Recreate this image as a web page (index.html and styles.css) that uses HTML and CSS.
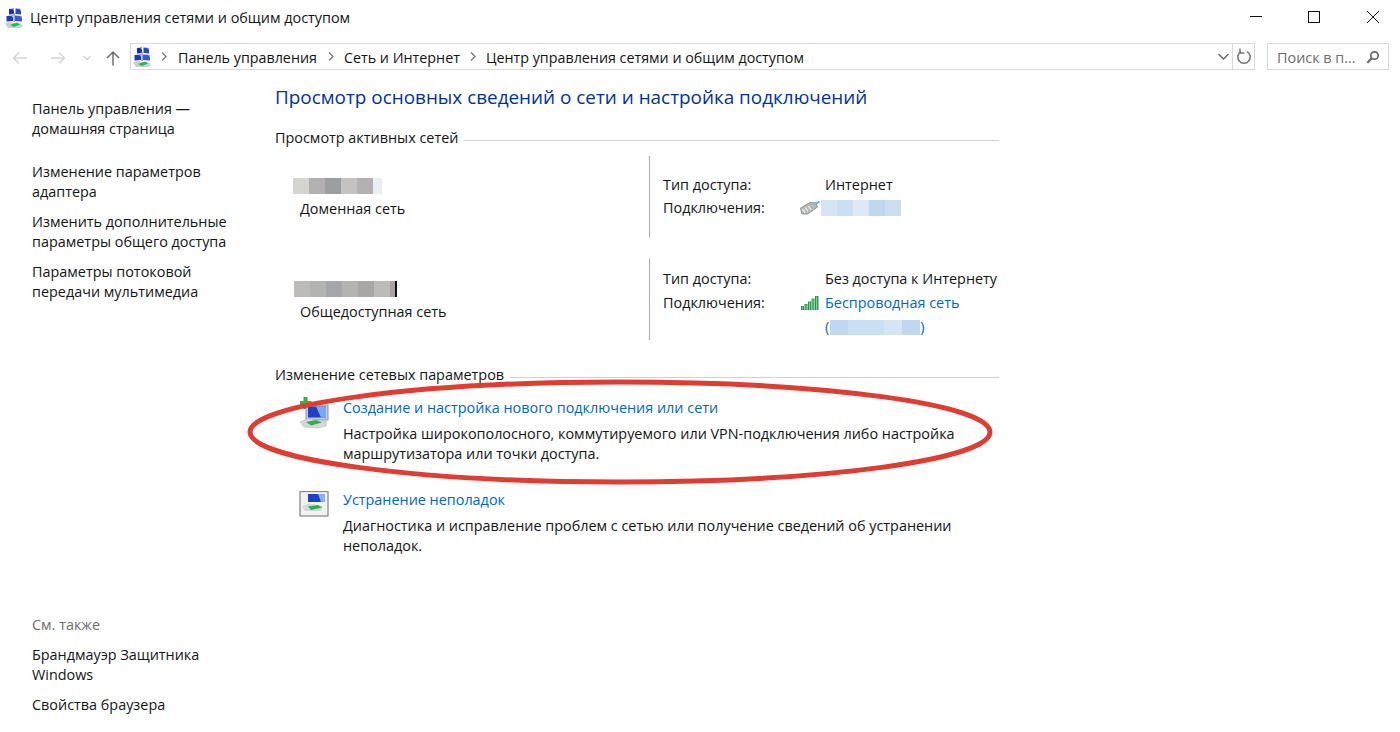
FILE: index.html
```html
<!DOCTYPE html>
<html lang="ru">
<head>
<meta charset="utf-8">
<title>Центр управления сетями и общим доступом</title>
<link rel="stylesheet" href="styles.css">
</head>
<body>
<div class="window">
  <svg width="0" height="0" class="defs">
    <defs>
      <g id="cp">
        <path d="M0 15.5L3 14L16 15.5L18 18L15 20L3 20Z" fill="#c9cfd2"/>
        <path d="M5 17L12 14.5L15 16.500L9 19Z" fill="#2bb84f"/>
        <path d="M4 1L9 .5V6L4 6.500Z" fill="#1d2fae"/>
        <path d="M10.500 .5L16 1V6.500L10.500 6Z" fill="#2a46c8"/>
        <path d="M1.500 8L8 7.500V13L1.500 13.500Z" fill="#2238b8"/>
        <path d="M10 7.500L17 8V13.500L10 13Z" fill="#3a5ad4"/>
        <path d="M7 .8L9 .5V3ZM14 .8L16 1V3.500ZM6 7.600L8 7.500V10ZM15 7.900L17 8V10.500Z" fill="#8fb0f0"/>
        <rect x="8.300" y="5" width="1.600" height="9" fill="#9aa3b2"/>
      </g>
    </defs>
  </svg>
  <header class="titlebar">
    <svg class="appicon" width="18" height="20" viewBox="0 0 18 20"><use href="#cp"/></svg>
    <span class="wintitle">Центр управления сетями и общим доступом</span>
    <div class="controls">
      <svg class="ctl" width="12" height="12" viewBox="0 0 12 12"><path d="M0 5.500H12" stroke="#111" fill="none"/></svg>
      <svg class="ctl" width="12" height="12" viewBox="0 0 12 12"><rect x=".5" y=".5" width="11" height="11" stroke="#111" fill="none"/></svg>
      <svg class="ctl" width="12" height="12" viewBox="0 0 12 12"><path d="M0 0L12 12M12 0L0 12" stroke="#111" fill="none"/></svg>
    </div>
  </header>
  <div class="navbar">
    <div class="navbtns">
      <svg width="16" height="14" viewBox="0 0 16 14"><path d="M15 7H1.500M7 1.500L1.500 7L7 12.500" stroke="#d4d4d4" stroke-width="1.400" fill="none"/></svg>
      <svg width="16" height="14" viewBox="0 0 16 14"><path d="M1 7H14.500M9 1.500L14.500 7L9 12.500" stroke="#d4d4d4" stroke-width="1.400" fill="none"/></svg>
      <svg width="8" height="6" viewBox="0 0 8 6"><path d="M.5 1L4 4.500L7.500 1" stroke="#d4d4d4" stroke-width="1.300" fill="none"/></svg>
      <svg width="14" height="16" viewBox="0 0 14 16"><path d="M7 15.500V2M1 8L7 2L13 8" stroke="#6d6d6d" stroke-width="1.500" fill="none"/></svg>
    </div>
    <div class="address">
      <svg class="addricon" width="18" height="20" viewBox="0 0 18 20"><use href="#cp"/></svg>
      <svg class="sep" width="6" height="9" viewBox="0 0 6 9"><path d="M1 .5L5 4.500L1 8.500" stroke="#777" stroke-width="1.300" fill="none"/></svg>
      <span class="crumb first-crumb">Панель управления</span>
      <svg class="sep" width="6" height="9" viewBox="0 0 6 9"><path d="M1 .5L5 4.500L1 8.500" stroke="#777" stroke-width="1.300" fill="none"/></svg>
      <span class="crumb">Сеть и Интернет</span>
      <svg class="sep" width="6" height="9" viewBox="0 0 6 9"><path d="M1 .5L5 4.500L1 8.500" stroke="#777" stroke-width="1.300" fill="none"/></svg>
      <span class="crumb">Центр управления сетями и общим доступом</span>
      <svg class="drop" width="11" height="7" viewBox="0 0 11 7"><path d="M.5 1L5.500 6L10.500 1" stroke="#666" stroke-width="1.400" fill="none"/></svg>
      <div class="refresh">
        <svg width="16" height="17" viewBox="0 0 16 17"><path d="M5 3.600A6.200 6.200 0 1 0 11 3.600" stroke="#777" stroke-width="1.600" fill="none"/><path d="M4 .5V5H8.500" stroke="#777" stroke-width="1.500" fill="none"/></svg>
      </div>
    </div>
    <div class="search">
      <span class="crumb">Поиск в п...</span>
      <svg width="14" height="14" viewBox="0 0 14 14"><circle cx="8.500" cy="5.500" r="3.700" stroke="#666" stroke-width="1.700" fill="none"/><path d="M5.800 8.200L1.300 12.700" stroke="#666" stroke-width="2.200"/></svg>
    </div>
  </div>
  <div class="body">
    <aside class="sidebar">
      <a class="sidelink">Панель управления —<br>домашняя страница</a>
      <a class="sidelink gap23">Изменение параметров<br>адаптера</a>
      <a class="sidelink">Изменить дополнительные<br>параметры общего доступа</a>
      <a class="sidelink">Параметры потоковой<br>передачи мультимедиа</a>
      <div class="also">См. также</div>
      <a class="sidelink">Брандмауэр Защитника<br>Windows</a>
      <a class="sidelink">Свойства браузера</a>
    </aside>
    <main class="content">
      <h1>Просмотр основных сведений о сети и настройка подключений</h1>
      <div class="sechead first-sec"><span>Просмотр активных сетей</span><i></i></div>
      <section class="net net1">
        <div class="netleft">
          <div class="mask m1"><b class="g1"></b><b class="g2"></b><b class="g3"></b><b class="g4"></b><b class="g2"></b><b class="g5"></b></div>
          <div class="netname">Доменная сеть</div>
        </div>
        <div class="netright">
          <div class="kv"><span class="k">Тип доступа:</span><span>Интернет</span></div>
          <div class="kv"><span class="k">Подключения:</span>
            <svg class="conn" width="20" height="14" viewBox="0 0 20 14"><path d="M.5 7L10 1.500L16 2L17.500 6L7.500 13L2 13Z" fill="#b4b8b7" stroke="#7b807e" stroke-width=".8"/><path d="M2.500 8L5 12M5.500 6.500L8 10.500M8.500 5L11 9" stroke="#f6f6f2" stroke-width="1.200"/><path d="M14 3L19.500 .8" stroke="#78b6ea" stroke-width="2.400"/></svg>
            <div class="mask m2"><b class="l1"></b><b class="l2"></b><b class="l3"></b><b class="l4"></b><b class="l2"></b></div>
          </div>
        </div>
      </section>
      <section class="net net2">
        <div class="netleft">
          <div class="mask m3"><b class="g6"></b><b class="g7"></b><b class="g8"></b><b class="g7"></b><b class="g9"></b><b class="g6"></b><b class="g10"></b><b class="bar"></b></div>
          <div class="netname">Общедоступная сеть</div>
        </div>
        <div class="netright">
          <div class="kv"><span class="k">Тип доступа:</span><span>Без доступа к Интернету</span></div>
          <div class="kv"><span class="k">Подключения:</span>
            <svg class="conn" width="20" height="16" viewBox="0 0 20 16"><path d="M1 11h3v4H1zM4.500 9h3v6h-3zM8 6.500h3V15H8zM11.500 3.500h3V15h-3zM15 1h3.500v14H15z" fill="#2f8f4e"/><path d="M2 11.500h1v3H2zM5.500 9.500h1v5h-1zM9 7h1v8H9zM12.500 4h1v11h-1zM16 1.500h1.200V15H16z" fill="#7fcf92"/></svg>
            <a class="link">Беспроводная сеть</a>
          </div>
          <div class="kv"><span class="k"></span><a class="link">(</a><div class="mask m4"><b class="l4"></b><b class="l2"></b><b class="l2"></b><b class="l1"></b><b class="l4"></b></div><a class="link">)</a></div>
        </div>
      </section>
      <div class="sechead sec2"><span>Изменение сетевых параметров</span><i></i></div>
      <div class="task">
        <svg class="taskicon icon1" width="30" height="33" viewBox="0 0 30 33"><path d="M4.500 1h4v4h4v4h-4v4h-4V9H1V5h3.500z" fill="#3fae3a"/><rect x="7" y="9" width="22" height="15" fill="#c2ccdc" stroke="#8893a6"/><rect x="9" y="10.500" width="18" height="11" fill="#1e3fc8"/><path d="M17 10.500h10v11h-5z" fill="#7fa8ee"/><path d="M1 26L9 22.500L27 25L27 30L19 32L5 31Z" fill="#d5d8da" stroke="#aab" stroke-width=".5"/><path d="M7 26L17 24L23 26.500L12 29.500Z" fill="#27b34a"/></svg>
        <div class="tasktext">
          <a class="link">Создание и настройка нового подключения или сети</a>
          <p>Настройка широкополосного, коммутируемого или VPN-подключения либо настройка<br>маршрутизатора или точки доступа.</p>
        </div>
      </div>
      <div class="task task2">
        <svg class="taskicon icon2" width="30" height="26" viewBox="0 0 30 26"><rect x="1" y=".5" width="28" height="24.500" fill="#f2f2f2" stroke="#8a8a8a" stroke-width="1.300"/><path d="M9 3h17v8H9z" fill="#1e3fc8"/><path d="M19 3h7v8h-4z" fill="#8cb0ee"/><path d="M3 15L10 12.500L24 15L22 20L6 20Z" fill="#d5d8da"/><path d="M9 15.500L19 14L23 16.500L12 19Z" fill="#27b34a"/></svg>
        <div class="tasktext">
          <a class="link">Устранение неполадок</a>
          <p>Диагностика и исправление проблем с сетью или получение сведений об устранении<br>неполадок.</p>
        </div>
      </div>
    </main>
  </div>
  <svg class="mark" width="760" height="114" viewBox="0 0 760 114"><ellipse cx="376" cy="57" rx="370" ry="50" fill="none" stroke="#e03c31" stroke-width="5"/></svg>
</div>
</body>
</html>
```
FILE: styles.css
```css
* { box-sizing: border-box; }
html, body { margin: 0; padding: 0; height: 100%; background: #fff; }
body { font-family: "Open Sans", "Noto Sans", "Liberation Sans", sans-serif; font-size: 14.4px; line-height: 20px; color: #141414; overflow: hidden; }
.window { position: relative; width: 1400px; height: 732px; display: flex; flex-direction: column; }
.defs { position: absolute; }
.titlebar { height: 36px; display: flex; align-items: center; padding-left: 5px; }
.appicon { flex: none; margin-top: -1px; }
.wintitle { margin-left: 7px; }
.controls { margin-left: auto; display: flex; padding: 0 21px 2px 0; }
.ctl + .ctl { margin-left: 46px; }
.ctl:last-child { margin-left: 47px; }
.navbar { height: 34px; margin-top: 3px; display: flex; align-items: center; padding-top: 1px; }
.navbtns { width: 130px; flex: none; display: flex; align-items: center; padding: 2px 0 0 12px; }
.navbtns svg:nth-child(2) { margin-left: 22px; }
.navbtns svg:nth-child(3) { margin-left: 17px; }
.navbtns svg:nth-child(4) { margin-left: 15px; }
.address { width: 1125px; height: 27px; border: 1px solid #d9d9d9; display: flex; align-items: center; padding-left: 2px; font-size: 14.3px; }
.addricon { flex: none; }
.crumb { padding-top: 2px; }
.first-crumb { margin-left: 1px; }
.sep { margin: 0 10px; flex: none; }
.first-crumb + .sep { margin-left: 11px; }
.drop { margin-left: auto; margin-right: 3px; }
.refresh { width: 22px; height: 25px; border-left: 1px solid #d9d9d9; display: flex; align-items: center; justify-content: center; }
.search { margin-left: 12px; width: 122px; height: 27px; border: 1px solid #d9d9d9; display: flex; align-items: center; justify-content: space-between; padding: 0 8px 0 9px; color: #6d6d6d; }
.body { flex: 1; display: flex; min-height: 0; }
.sidebar { width: 275px; flex: none; padding: 26px 0 0 32px; display: flex; flex-direction: column; gap: 10px; }
.sidelink { display: block; }
.gap23 { margin-top: 13px; }
.also { color: #6d6d6d; margin-top: 303px; }
.content { width: 724px; flex: none; }
h1 { margin: 0; font-size: 18.9px; font-weight: 400; line-height: 26px; color: #003399; padding-top: 11px; }
.sechead { display: flex; align-items: center; gap: 6px; height: 20px; }
.sechead i { flex: 1; height: 1px; background: #d0d0d0; margin-top: 5px; }
.first-sec { margin-top: 18px; }
.net { height: 81px; margin-top: 8px; display: flex; }
.net2 { margin-top: 22px; }
.netleft { width: 375px; flex: none; border-right: 1px solid #a9a9a9; padding-top: 22px; padding-left: 18px; }
.mask { display: flex; height: 16px; }
.mask b { display: block; width: 16px; height: 100%; flex: none; }
.netname { margin: 5px 0 0 7px; }
.m3 { margin-left: 1px; }
.netright { padding: 19px 0 0 13px; }
.net2 .netright { padding-top: 10px; }
.kv { display: flex; align-items: center; height: 20px; margin-bottom: 4px; }
.net1 .kv { margin-bottom: 3px; }
.k { width: 162px; flex: none; }
.conn { margin-left: -25px; margin-right: 5px; flex: none; }
.link { color: #0066cc; }
.m2 { margin-left: -4px; }
.mask.m4 { margin-left: 1px; height: 15px; }
.mask.m4 b { width: 18px; }
.g1 { background: #d4d4d0; } .g2 { background: #b2b0b0; } .g3 { background: #9d9ea1; } .g4 { background: #c5c3c1; }
.mask .g5 { background: #e9eef2; width: 9px; }
.g6 { background: #bcbbb9; } .g7 { background: #b3b3b1; } .g8 { background: #a5a6a9; } .g9 { background: #a9a6a6; }
.mask .g10 { background: #a8a3a0; width: 5px; }
.mask .bar { background: #10101a; width: 2px; }
.l1 { background: #d6e5f6; } .l2 { background: #cadef4; } .l3 { background: #dfe9f6; } .l4 { background: #bfd7f0; }
.sec2 { margin-top: 25px; }
.task { display: flex; margin-top: 9px; }
.taskicon { flex: none; margin-left: 24px; margin-right: 14px; }
.icon1 { margin-top: 2px; }
.icon2 { margin-top: 5px; }
.tasktext { margin-top: 4px; }
.tasktext p { margin: 6px 0 0; }
.task2 { margin-top: 22px; }
.mark { position: absolute; left: 244px; top: 375px; pointer-events: none; }
```
